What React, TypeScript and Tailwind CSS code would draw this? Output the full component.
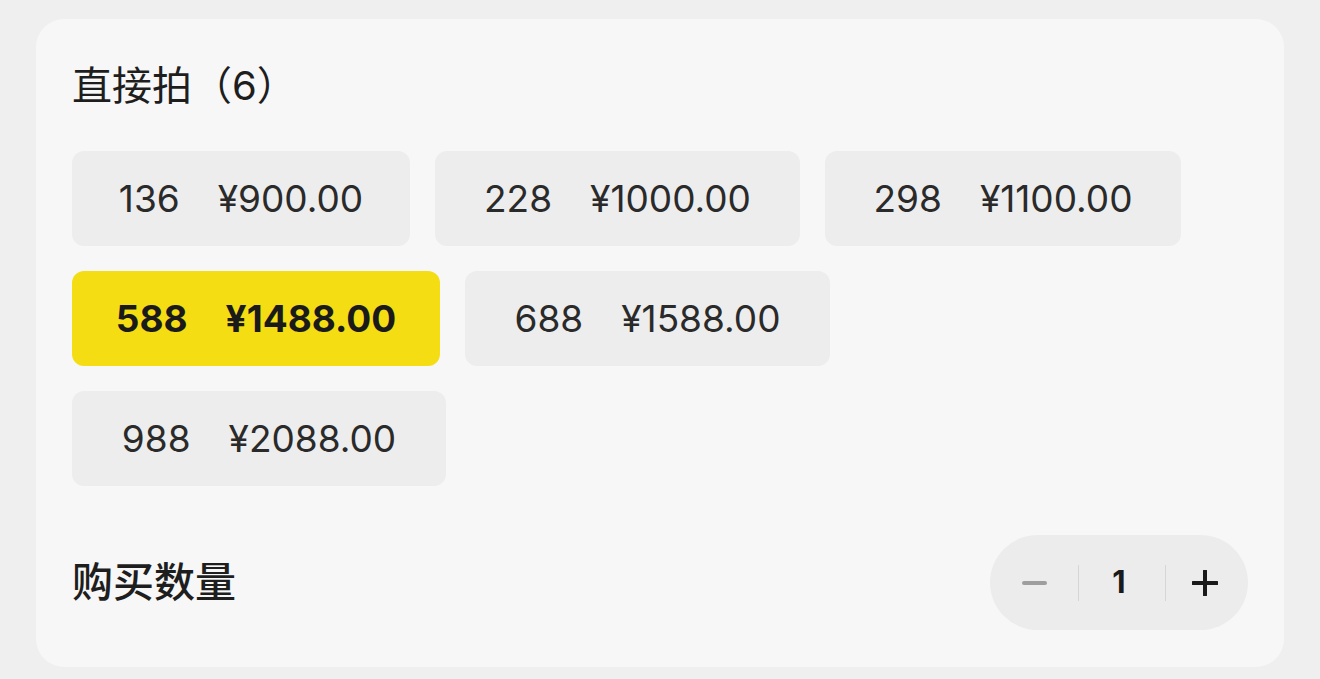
const options = [
  { qty: '136', price: '¥900.00', w: 'w-[338px]' },
  { qty: '228', price: '¥1000.00', w: 'w-[365px]' },
  { qty: '298', price: '¥1100.00', w: 'w-[356px]' },
  { qty: '588', price: '¥1488.00', w: 'w-[368px]', selected: true },
  { qty: '688', price: '¥1588.00', w: 'w-[365px]' },
  { qty: '988', price: '¥2088.00', w: 'w-[374px]' },
];

const font = { fontFamily: 'Inter, "Noto Sans CJK SC", sans-serif' };

export default function App() {
  return (
    <div className="w-[1320px] h-[679px] bg-[#efefef] pt-[19px] pl-[36px] pr-[36px]" style={font}>
      <div className="w-[1248px] h-[648px] bg-[#f7f7f7] rounded-[28px] pl-[36px] pr-[36px] pt-[42px] flex flex-col">
        <h2 className="text-[40px] leading-[50px] text-[#1e1e1e] font-normal">直接拍（6）</h2>

        {/* options */}
        <div className="flex flex-wrap gap-x-[25px] gap-y-[25px] mt-[40px] w-[1120px]">
          {options.map((o) => (
            <div
              key={o.qty}
              className={`${o.w} h-[95px] rounded-[12px] flex items-center justify-center gap-[38px] text-[37px] ${
                o.selected ? 'bg-[#f5dd13] font-bold text-[#1a1a1a]' : 'bg-[#ededed] font-normal text-[#2a2a2a]'
              }`}
            >
              <span>{o.qty}</span>
              <span>{o.price}</span>
            </div>
          ))}
        </div>

        {/* quantity */}
        <div className="flex items-center justify-between mt-[49px]">
          <span className="text-[41px] text-[#1e1e1e] font-medium">购买数量</span>
          <div className="w-[258px] h-[95px] rounded-full bg-[#ececec] flex items-center">
            <div className="w-[88px] flex justify-center">
              <div className="w-[25px] h-[4px] bg-[#9e9e9e] rounded-sm" />
            </div>
            <div className="w-px h-[36px] bg-[#d6d6d6]" />
            <div className="flex-1 text-center text-[31px] font-bold text-[#1a1a1a] pr-[6px]">1</div>
            <div className="w-px h-[36px] bg-[#d6d6d6]" />
            <div className="w-[82px] flex justify-center pr-[4px]">
              <svg width="26" height="26" viewBox="0 0 26 26">
                <path d="M13 1v24M1 13h24" stroke="#1a1a1a" strokeWidth="4" strokeLinecap="round" />
              </svg>
            </div>
          </div>
        </div>
      </div>
    </div>
  );
}
